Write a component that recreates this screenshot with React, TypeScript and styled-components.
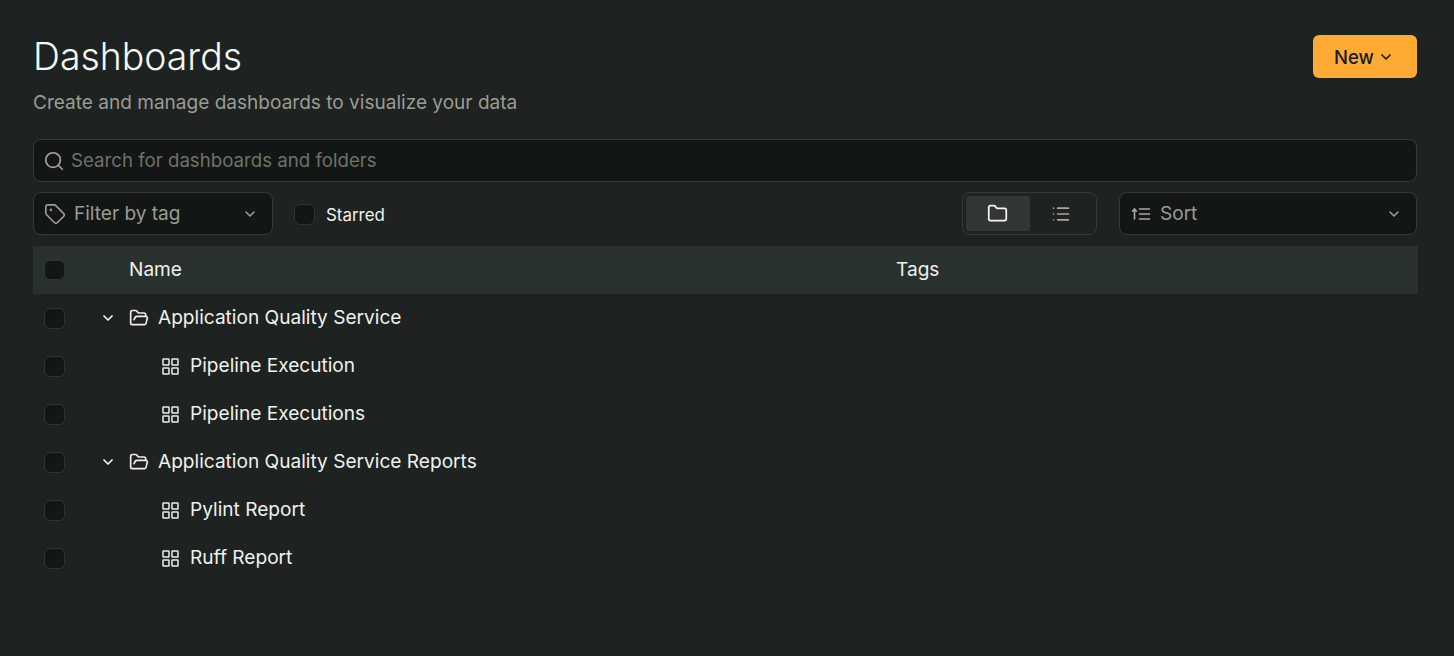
import React from "react";
import styled, { createGlobalStyle } from "styled-components";
import { ChevronDown, FolderOpen, Folder, List, Search, Tag } from "lucide-react";

const GlobalStyle = createGlobalStyle`
  html, body { margin: 0; padding: 0; background: #1e2221; }
  body { font-family: Inter, "Liberation Sans", sans-serif; color: #f0f2ee; }
`;

const Page = styled.div`
  box-sizing: border-box;
  width: 1454px;
  height: 656px;
  overflow: hidden;
  padding: 35px 37px 0 33px;
  background: #1e2221;
`;

const Header = styled.header`
  display: flex;
  justify-content: space-between;
  align-items: flex-start;
  height: 104px;
`;

const Title = styled.h1`
  margin: 0;
  font-size: 37.4px;
  line-height: 44px;
  font-weight: 300;
  color: #f4fbf5;
`;

const Subtitle = styled.p`
  margin: 12px 0 0;
  font-size: 19.06px;
  line-height: 24px;
  color: #9a9d92;
`;

const NewButton = styled.button`
  display: flex;
  align-items: center;
  gap: 4px;
  width: 104px;
  height: 43px;
  padding: 0 0 0 21px;
  border: 0;
  border-radius: 6px;
  background: #ffab33;
  color: #1a1c1b;
  font: 500 18.5px Inter, sans-serif;
`;

const Field = styled.div<{ $width?: number }>`
  box-sizing: border-box;
  display: flex;
  align-items: center;
  height: 43px;
  width: ${(p) => (p.$width ? `${p.$width}px` : "auto")};
  padding: 0 14px 0 10px;
  background: #121615;
  border: 1px solid #353937;
  border-radius: 8px;
  color: #9a9d92;
  font-size: 19.06px;
`;

const SearchField = styled(Field)`
  gap: 6px;
  margin-bottom: 10px;
  padding-left: 9px;
  font-size: 18.67px;
  color: #6f7269;
`;

const Toolbar = styled.div`
  display: flex;
  align-items: center;
  height: 43px;
  margin-bottom: 11px;
`;

const Grow = styled.span`
  flex: 1;
`;

const FieldLabel = styled.span`
  flex: 1;
  margin-left: 8px;
`;

const Check = styled.span`
  box-sizing: border-box;
  display: block;
  flex: none;
  width: 21px;
  height: 21px;
  background: #121615;
  border: 1px solid #2f3432;
  border-radius: 6px;
`;

const HeadCheck = styled(Check)`
  height: 20px;
  margin-bottom: 1px;
`;

const Starred = styled.label`
  display: flex;
  align-items: center;
  gap: 11px;
  margin-left: 21px;
  padding-top: 2px;
  font-size: 16.9px;
  font-weight: 400;
  color: #f0f2ee;
`;

const Layouts = styled.div`
  box-sizing: border-box;
  display: flex;
  width: 135px;
  height: 43px;
  padding: 3px;
  margin-right: 22px;
  border: 1px solid #353937;
  border-radius: 8px;
`;

const LayoutOption = styled.span<{ $active?: boolean }>`
  display: flex;
  align-items: center;
  justify-content: center;
  width: 64px;
  border-radius: 3px;
  background: ${(p) => (p.$active ? "#323734" : "transparent")};
  color: ${(p) => (p.$active ? "#f4f6f0" : "#a5a89c")};
`;

const Row = styled.div<{ $head?: boolean }>`
  display: flex;
  align-items: center;
  height: 48px;
  width: 1385px;
  padding-left: 11px;
  box-sizing: border-box;
  font-size: 19.1px;
  color: #f0f2ee;
  background: ${(p) => (p.$head ? "#29312e" : "transparent")};
`;

const Label = styled.span`
  margin-bottom: 2px;
`;

const NameHead = styled(Label)`
  width: 767px;
  margin-left: 64px;
`;

const Chevron = styled.span`
  display: flex;
  justify-content: center;
  width: 18px;
  margin-left: 34px;
  margin-right: 12px;
`;

const Indent = styled.span`
  width: 97px;
`;

const RowIcon = styled.span<{ $gap: number }>`
  display: flex;
  margin-right: ${(p) => p.$gap}px;
`;

const SortIcon = () => (
  <svg width="22" height="22" viewBox="0 0 22 22" fill="none" stroke="#a5a89c" strokeWidth="1.6" strokeLinecap="round">
    <path d="M4.5 16V6M2.6 8.2 4.5 6l1.9 2.2" />
    <path d="M9.5 6h10M9.5 11h10M9.5 16h10" />
  </svg>
);

const DashboardIcon = () => (
  <svg width="17" height="17" viewBox="0 0 17 17" fill="none" stroke="#ecefe8" strokeWidth="1.5">
    <rect x="1" y="1" width="6" height="6" rx="0.5" />
    <rect x="10" y="1" width="6" height="6" rx="0.5" />
    <rect x="1" y="10" width="6" height="6" rx="0.5" />
    <rect x="10" y="10" width="6" height="6" rx="0.5" />
  </svg>
);

type Item = { name: string; folder?: boolean };

const items: Item[] = [
  { name: "Application Quality Service", folder: true },
  { name: "Pipeline Execution" },
  { name: "Pipeline Executions" },
  { name: "Application Quality Service Reports", folder: true },
  { name: "Pylint Report" },
  { name: "Ruff Report" },
];

export default function App() {
  return (
    <Page>
      <GlobalStyle />
      <Header>
        <div>
          <Title>Dashboards</Title>
          <Subtitle>Create and manage dashboards to visualize your data</Subtitle>
        </div>
        <NewButton>
          New <ChevronDown size={16} strokeWidth={2.6} />
        </NewButton>
      </Header>

      <SearchField>
        <Search size={22} strokeWidth={1.8} color="#a5a89c" />
        Search for dashboards and folders
      </SearchField>

      <Toolbar>
        <Field $width={240}>
          <Tag size={22} strokeWidth={1.8} />
          <FieldLabel>Filter by tag</FieldLabel>
          <ChevronDown size={16} strokeWidth={2.4} />
        </Field>
        <Starred>
          <Check />
          Starred
        </Starred>
        <Grow />
        <Layouts>
          <LayoutOption $active>
            <Folder size={21} strokeWidth={2} />
          </LayoutOption>
          <LayoutOption>
            <List size={20} strokeWidth={2} />
          </LayoutOption>
        </Layouts>
        <Field $width={298}>
          <SortIcon />
          <FieldLabel>Sort</FieldLabel>
          <ChevronDown size={16} strokeWidth={2.4} />
        </Field>
      </Toolbar>

      <Row $head>
        <HeadCheck />
        <NameHead>Name</NameHead>
        <Label>Tags</Label>
      </Row>

      {items.map((item) => (
        <Row key={item.name}>
          <Check />
          {item.folder ? (
            <>
              <Chevron>
                <ChevronDown size={16} strokeWidth={2.6} />
              </Chevron>
              <RowIcon $gap={9}>
                <FolderOpen size={20} strokeWidth={2} />
              </RowIcon>
            </>
          ) : (
            <>
              <Indent />
              <RowIcon $gap={11}>
                <DashboardIcon />
              </RowIcon>
            </>
          )}
          <Label>{item.name}</Label>
        </Row>
      ))}
    </Page>
  );
}
